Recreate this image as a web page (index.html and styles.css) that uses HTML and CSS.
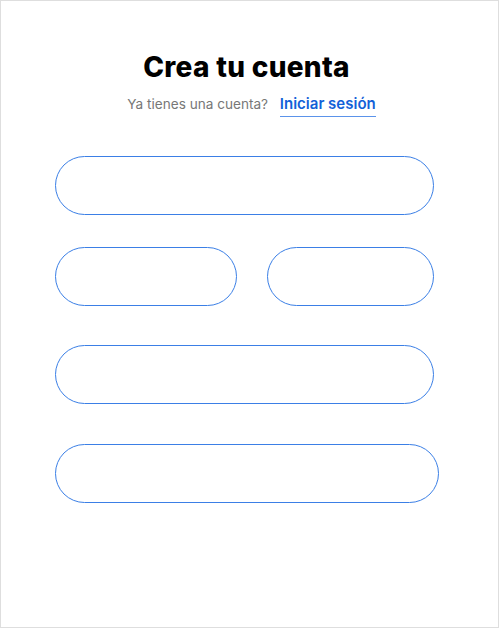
FILE: index.html
```html
<!DOCTYPE html>
<html lang="es">
<head>
<meta charset="utf-8">
<title>Crea tu cuenta</title>
<link rel="stylesheet" href="styles.css">
</head>
<body>
<div class="frame">
  <h1 class="title">Crea tu cuenta</h1>
  <p class="subtitle">Ya tienes una cuenta? <a class="login" href="#">Iniciar sesión</a></p>
  <form class="form">
    <div class="field field-full"></div>
    <div class="row">
      <div class="field field-a"></div>
      <div class="field field-b"></div>
    </div>
    <div class="field field-full field-3"></div>
    <div class="field field-wide field-4"></div>
  </form>
</div>
</body>
</html>
```
FILE: styles.css
```css
* { box-sizing: border-box; }
html, body { margin: 0; padding: 0; background: #fff; }
.frame {
  width: 499px;
  height: 628px;
  border: 1px solid #dedede;
  font-family: Inter, "Liberation Sans", sans-serif;
  padding-top: 49px;
}
.title {
  margin: 0;
  padding-right: 6px;
  text-align: center;
  font-size: 28px;
  font-weight: 800;
  color: #000;
  letter-spacing: 0.3px;
  line-height: 34px;
}
.subtitle {
  margin: 10px 0 0;
  padding-left: 4px;
  text-align: center;
  font-size: 13.6px;
  color: #777;
  line-height: 20px;
}
.login {
  margin-left: 8px;
  color: #1261d8;
  font-weight: 600;
  font-size: 15px;
  text-decoration: none;
  border-bottom: 1px solid #5b93ea;
  padding-bottom: 3px;
}
.form {
  margin: 42px 0 0 54px;
  display: flex;
  flex-direction: column;
}
.field {
  height: 59px;
  border: 1px solid #3b7fe6;
  border-radius: 30px;
}
.field-full { width: 379px; }
.field-wide { width: 384px; }
.row {
  display: flex;
  gap: 30px;
  margin-top: 32px;
}
.field-a { width: 182px; }
.field-b { width: 167px; }
.field-3 { margin-top: 39px; }
.field-4 { margin-top: 40px; }
```
